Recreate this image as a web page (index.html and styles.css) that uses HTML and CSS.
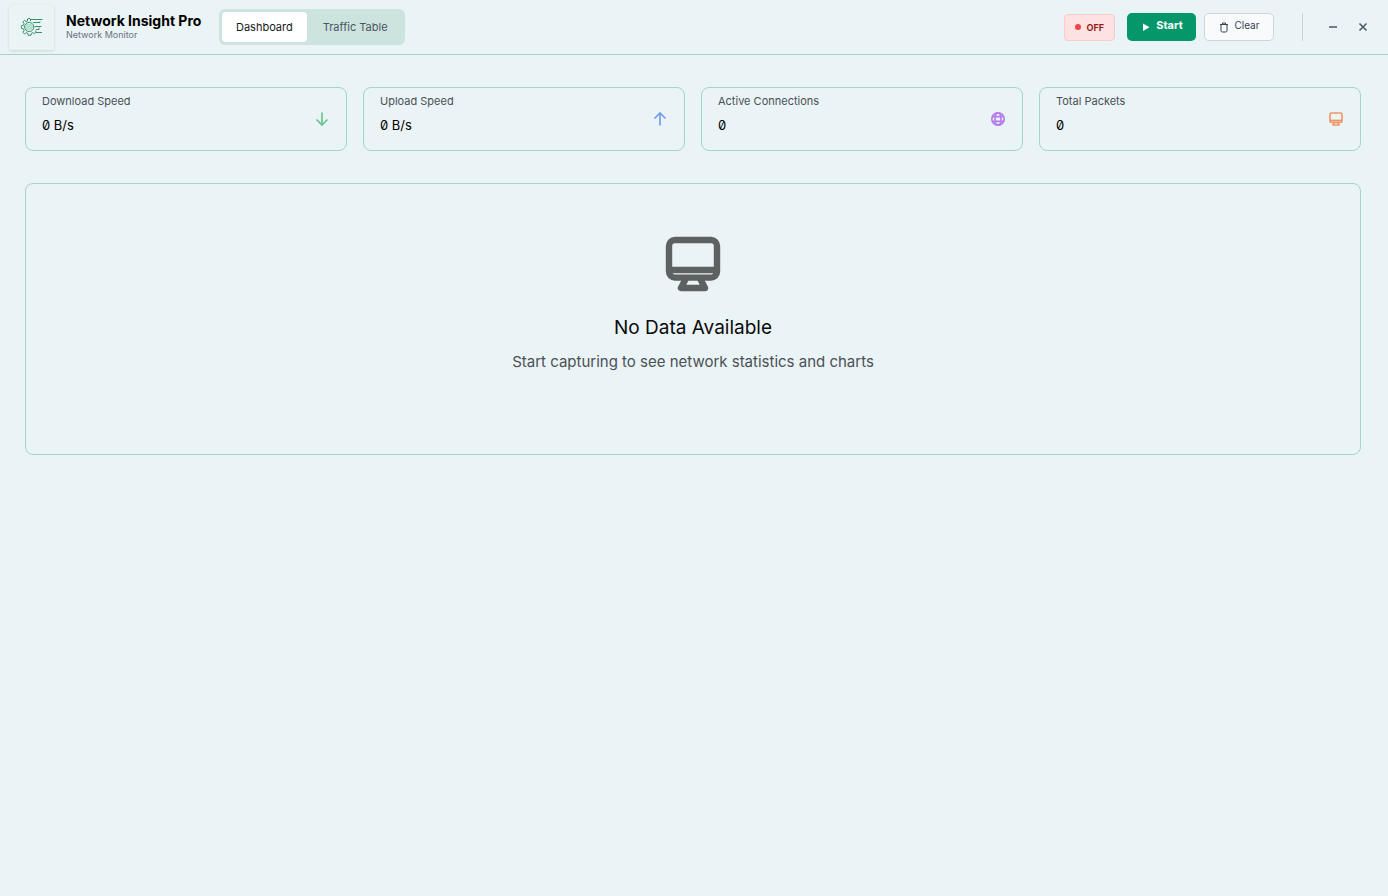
FILE: index.html
```html
<!DOCTYPE html>
<html lang="en">
<head>
    <meta charset="utf-8">
    <meta name="viewport" content="width=device-width, initial-scale=1.0">
    <title>Network Insight Pro</title>
    <link rel="stylesheet" href="styles.css">
</head>
<body>

    <!-- shared icons -->
    <svg class="sprite" aria-hidden="true">
        <symbol id="icon-monitor" viewBox="0 0 16 16">
            <rect x="2" y="2" width="12" height="9.4" rx="1.5"/>
            <path d="M2 9.5h12"/>
            <path d="M6.2 11.7L5 14h6l-1.2-2.3" stroke-linecap="round" stroke-linejoin="round"/>
        </symbol>
    </svg>

    <header class="titlebar">
        <div class="logo">
            <svg viewBox="0 0 24 24" width="24" height="24">
                <path d="M10.5 6V4q-1.5-1.4-3 0v2L6 6.6 4.6 5.4 2.8 7l1.2 1.7-.6 1.6-2 .5v2.6l2 .4.7 1.7-1.3 1.8 1.9 1.6 1.7-1.2 1.5.6.3 2h2.8l.4-2 1.5-.7 1.7 1.2 1.6-1.8-1-1.6"/>
                <path d="M10.5 4.5h12M13 7.5h7v-1M14.5 11.5h7M16 14.5h3v-2M16 17.5h6"/>
                <circle cx="9.2" cy="12" r="4.6"/>
                <path class="logo-light" d="M6 10h6.5M5 12h8M6 14h6.5"/>
            </svg>
        </div>
        <div class="brand">
            <h1>Network Insight Pro</h1>
            <p>Network Monitor</p>
        </div>

        <nav class="tabs">
            <button type="button" class="tab active">Dashboard</button>
            <button type="button" class="tab">Traffic Table</button>
        </nav>

        <div class="actions">
            <span class="status"><i class="dot"></i>OFF</span>
            <button type="button" class="btn btn-start">
                <svg viewBox="0 0 12 12" width="12" height="12"><path d="M3 2.5v7.5l6.5-3.75z"/></svg>
                <span>Start</span>
            </button>
            <button type="button" class="btn btn-clear">
                <svg viewBox="0 0 12 12" width="12" height="12"><path d="M2 3.5h8M3 3.5v6q0 1.5 1.5 1.5h3q1.5 0 1.5-1.5v-6M4.5 3.5V2h3v1.5"/></svg>
                <span>Clear</span>
            </button>
        </div>

        <div class="window-controls">
            <button type="button" aria-label="Minimize"><svg viewBox="0 0 12 12" width="12" height="12"><path d="M2 6h8"/></svg></button>
            <button type="button" aria-label="Close"><svg viewBox="0 0 12 12" width="12" height="12"><path d="M2.5 2.5l7 7M9.5 2.5l-7 7"/></svg></button>
        </div>
    </header>

    <main>
        <section class="stats">
            <div class="card">
                <div>
                    <p class="label">Download Speed</p>
                    <p class="value">0 B/s</p>
                </div>
                <svg class="icon green" viewBox="0 0 16 16"><path d="M8 1.5V14M2.5 8.5L8 14l5.5-5.5"/></svg>
            </div>
            <div class="card">
                <div>
                    <p class="label">Upload Speed</p>
                    <p class="value">0 B/s</p>
                </div>
                <svg class="icon blue" viewBox="0 0 16 16"><path d="M8 14.5V2M2.5 7.5L8 2l5.5 5.5"/></svg>
            </div>
            <div class="card">
                <div>
                    <p class="label">Active Connections</p>
                    <p class="value">0</p>
                </div>
                <svg class="icon purple" viewBox="0 0 16 16"><circle cx="8" cy="8" r="6.2"/><ellipse cx="8" cy="8" rx="3" ry="6.2"/><path d="M2.5 5.7h11M2.5 10.3h11"/></svg>
            </div>
            <div class="card">
                <div>
                    <p class="label">Total Packets</p>
                    <p class="value">0</p>
                </div>
                <svg class="icon orange"><use href="#icon-monitor"/></svg>
            </div>
        </section>

        <section class="empty">
            <svg class="empty-icon"><use href="#icon-monitor"/></svg>
            <h2>No Data Available</h2>
            <p>Start capturing to see network statistics and charts</p>
        </section>
    </main>

</body>
</html>
```
FILE: styles.css
```css
* {
    box-sizing: border-box;
}

body {
    margin: 0;
    min-height: 100vh;
    background: #eaf3f5;
    color: #0a0a0a;
    font-family: Inter, "Noto Sans", sans-serif;
    font-feature-settings: "zero";
}

h1, h2, p {
    margin: 0;
}

button {
    font: inherit;
    border: 0;
    padding: 0;
    cursor: pointer;
}

svg {
    fill: none;
    stroke: currentColor;
    flex-shrink: 0;
}

.sprite {
    display: none;
}

/* title bar */
.titlebar {
    display: flex;
    align-items: center;
    height: 55px;
    padding: 0 10px 0 9px;
    border-bottom: 1px solid #a3d5c8;
}

.logo {
    display: flex;
    align-items: center;
    justify-content: center;
    width: 45px;
    height: 45px;
    border-radius: 2px;
    box-shadow: 0 1px 3px rgba(0, 0, 0, 0.12);
    background: #ebf4f5;
    color: #38906a;
}

.logo-light {
    stroke: #7fd0ab;
}

.brand {
    margin-left: 12px;
    width: 142px;
    white-space: nowrap;
}

.brand h1 {
    font-size: 14px;
    line-height: 16px;
    font-weight: 700;
    color: #000;
}

.brand p {
    font-size: 9px;
    line-height: 12px;
    color: #6b7280;
}

.tabs {
    display: flex;
    gap: 2px;
    margin-left: 11px;
    padding: 3px;
    border-radius: 6px;
    background: #cde4de;
}

.tab {
    height: 30px;
    padding: 0 14px;
    border-radius: 4px;
    background: transparent;
    font-size: 11px;
    color: #4b5563;
}

.tab.active {
    background: #fff;
    color: #18181b;
}

.actions {
    display: flex;
    align-items: center;
    gap: 8px;
    margin-left: auto;
}

.status {
    display: flex;
    align-items: center;
    gap: 6px;
    height: 27px;
    margin-right: 4px;
    padding: 0 10px;
    border: 1px solid #fecaca;
    border-radius: 4px;
    background: #fee2e2;
    color: #991b1b;
    font-size: 9px;
    font-weight: 700;
}

.dot {
    width: 6px;
    height: 6px;
    border-radius: 50%;
    background: #ef4444;
}

.btn {
    display: flex;
    align-items: center;
    justify-content: center;
    gap: 4px;
    height: 28px;
    border-radius: 5px;
    font-size: 11px;
    line-height: 14px;
}

.btn span {
    padding-bottom: 4px;
}

.btn-start {
    width: 69px;
    background: #059669;
    color: #fff;
    font-weight: 700;
}

.btn-start svg {
    fill: #fff;
    stroke: none;
}

.btn-clear {
    width: 70px;
    border: 1px solid #d1d5db;
    background: #f9fafb;
    color: #374151;
    font-size: 10px;
}

.window-controls {
    display: flex;
    align-items: center;
    height: 28px;
    margin-left: 28px;
    padding-left: 15px;
    border-left: 1px solid #cbd5d9;
}

.window-controls button {
    display: flex;
    align-items: center;
    justify-content: center;
    width: 30px;
    height: 28px;
    background: transparent;
    color: #4b5563;
}

.window-controls path {
    stroke-width: 1.5;
}

/* dashboard */
main {
    padding: 32px 27px 32px 25px;
}

.stats {
    display: grid;
    grid-template-columns: repeat(4, 1fr);
    gap: 16px;
}

.card {
    display: flex;
    align-items: center;
    justify-content: space-between;
    height: 64px;
    padding: 0 16px;
    border: 1px solid #a3d5c8;
    border-radius: 8px;
}

.label {
    padding-bottom: 6px;
    font-size: 11px;
    line-height: 16px;
    color: #4b5055;
}

.value {
    padding-bottom: 10px;
    font-size: 13px;
    line-height: 20px;
    color: #000;
}

.icon {
    width: 16px;
    height: 16px;
    stroke-width: 1.7;
}

.green {
    color: #6bc491;
}

.blue {
    color: #759eee;
}

.purple {
    color: #b57bed;
}

.orange {
    color: #f09868;
}

.empty {
    display: flex;
    flex-direction: column;
    align-items: center;
    margin-top: 32px;
    padding: 48px 24px 80px;
    border: 1px solid #a3d5c8;
    border-radius: 8px;
    text-align: center;
}

.empty-icon {
    width: 64px;
    height: 64px;
    stroke-width: 1.6;
    color: #5d6162;
}

.empty h2 {
    margin-top: 18px;
    font-size: 19px;
    line-height: 28px;
    font-weight: 400;
}

.empty p {
    margin-top: 8px;
    font-size: 15px;
    line-height: 24px;
    color: #4b5055;
}
```
